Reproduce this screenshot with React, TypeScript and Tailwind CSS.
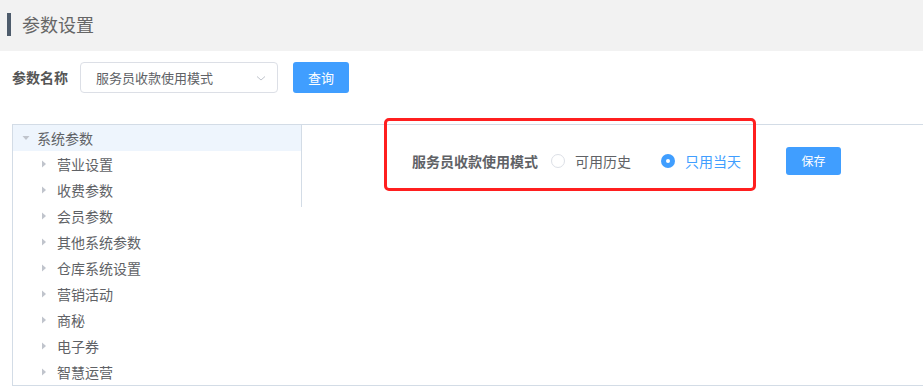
import React from "react";

const font = { fontFamily: '"Noto Sans CJK SC", "Noto Sans", sans-serif' };

const children = ["营业设置", "收费参数", "会员参数", "其他系统参数", "仓库系统设置", "营销活动", "商秘", "电子券", "智慧运营"];

export default function App() {
  return (
    <div className="w-[923px] h-[391px] bg-white overflow-hidden relative" style={font}>
      <div className="h-[51px] bg-[#f2f2f2] flex items-start pt-[13px] pl-[7px]">
        <div className="w-[4px] h-[23px] bg-[#4e5c6c] mr-[11px]" />
        <span className="text-[18px] text-[#666] leading-[22px]">参数设置</span>
      </div>
      <div className="flex items-center h-[31px] mt-[11px] pl-[12px]">
        <span className="text-[14px] font-bold text-[#555] w-[68px]">参数名称</span>
        <div className="w-[198px] h-[31px] border border-[#dcdfe6] rounded-[4px] flex items-center justify-between pl-[15px] pr-[10px]">
          <span className="text-[13px] text-[#606266]">服务员收款使用模式</span>
          <svg width="12" height="12" viewBox="0 0 12 12"><path d="M2 4.5 L6 8 L10 4.5" fill="none" stroke="#c0c4cc" strokeWidth="1" /></svg>
        </div>
        <button className="ml-[15px] w-[56px] h-[31px] bg-[#409eff] rounded-[3px] text-white text-[13px]">查询</button>
      </div>
      <div className="ml-[12px] mt-[31px] w-[1000px] h-[262px] border-y border-l border-[#d3dce6] flex">
        <div className="w-[288px] flex flex-col">
          <div className="h-[26px] bg-[#eef5fd] flex items-center pl-[8px]">
            <svg width="10" height="10" viewBox="0 0 10 10" className="mr-[6px]"><path d="M1.5 3 L8.5 3 L5 7 Z" fill="#c0c4cc" /></svg>
            <span className="text-[14px] text-[#606266]">系统参数</span>
          </div>
          {children.map((c) => (
            <div key={c} className="h-[26px] flex items-center pl-[26px]">
              <svg width="10" height="10" viewBox="0 0 10 10" className="mr-[8px]"><path d="M3 1.5 L7 5 L3 8.5 Z" fill="#c0c4cc" /></svg>
              <span className="text-[14px] text-[#606266]">{c}</span>
            </div>
          ))}
        </div>
        <div className="self-start h-[82px] border-l border-[#d3dce6] flex-1 flex items-start pt-[22px] pl-[110px]">
          <div className="flex items-center h-[28px]">
            <span className="text-[14px] font-bold text-[#606266]">服务员收款使用模式</span>
            <span className="ml-[13px] w-[14px] h-[14px] rounded-full border border-[#dcdfe6] bg-white" />
            <span className="ml-[10px] text-[14px] text-[#606266]">可用历史</span>
            <span className="ml-[30px] w-[14px] h-[14px] rounded-full bg-[#409eff] flex items-center justify-center">
              <span className="w-[4px] h-[4px] rounded-full bg-white" />
            </span>
            <span className="ml-[10px] text-[14px] text-[#409eff]">只用当天</span>
            <button className="ml-[45px] w-[55px] h-[28px] bg-[#409eff] rounded-[3px] text-white text-[12px]">保存</button>
          </div>
        </div>
      </div>
      <div className="absolute left-[384px] top-[118px] w-[372px] h-[73px] border-[3px] border-[#ff1f1f] rounded-[5px]" />
    </div>
  );
}
